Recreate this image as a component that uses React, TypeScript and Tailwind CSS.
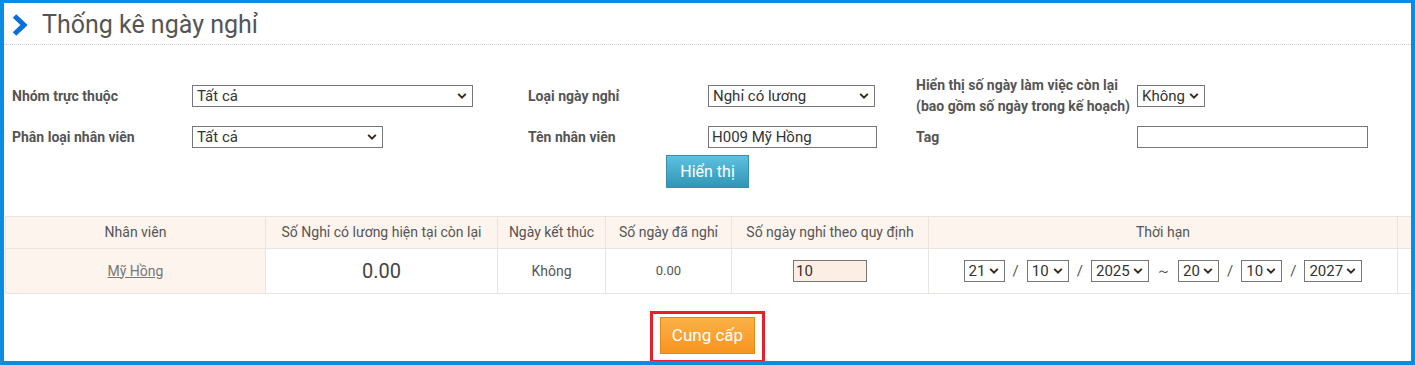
import { ReactNode } from 'react';

// Fake native select: box + value + small chevron
function Select({ value, className = '' }: { value: string; className?: string }) {
  return (
    <div
      className={`relative flex h-[22px] items-center border border-[#777] bg-white pl-[4px] pr-[20px] text-[15px] leading-none text-[#333] ${className}`}
    >
      <span>{value}</span>
      <svg
        className="absolute right-[5px] top-1/2 -translate-y-1/2"
        width="10"
        height="7"
        viewBox="0 0 10 7"
        fill="none"
      >
        <path d="M1.2 1.4 5 5.2 8.8 1.4" stroke="#3a2a1a" strokeWidth="2" />
      </svg>
    </div>
  );
}

function TextInput({ value = '', className = '' }: { value?: string; className?: string }) {
  return (
    <div
      className={`flex h-[22px] items-center border border-[#777] pl-[3px] text-[15px] leading-none text-[#333] ${className}`}
    >
      {value}
    </div>
  );
}

function Label({ children }: { children: ReactNode }) {
  return <div className="text-[14px] font-bold leading-[21px] text-[#555]">{children}</div>;
}

const Slash = () => <span className="px-[8px] text-[15px] text-[#555]">/</span>;

export default function App() {
  return (
    <div
      className="h-[365px] w-[1415px] overflow-hidden border-b-[4px] border-l-[4px] border-r-[4px] border-t-[3px] border-[#0b8ce0] bg-white"
      style={{ fontFamily: 'Roboto, "Noto Sans", sans-serif' }}
    >
      <div className="h-full overflow-hidden">
        {/* Title */}
        <div className="flex h-[42px] items-center border-b border-dotted border-[#c8c8c8] pl-[7px]">
          <svg width="18" height="24" viewBox="0 0 18 24" className="mt-[2px]">
            <path d="M3.5 3 13 12 3.5 21" stroke="#0a6fd8" strokeWidth="5" fill="none" />
          </svg>
          <h1 className="ml-[13px] mt-[2px] text-[25px] font-normal text-[#555]">Thống kê ngày nghỉ</h1>
        </div>

        {/* Filter form */}
        <div className="grid grid-cols-[180px_336px_180px_208px_221px_1fr] items-center gap-y-[9px] pl-[8px] pt-[30px]">
          <Label>Nhóm trực thuộc</Label>
          <Select value="Tất cả" className="w-[281px]" />
          <Label>Loại ngày nghỉ</Label>
          <Select value="Nghỉ có lương" className="w-[167px]" />
          <Label>
            Hiển thị số ngày làm việc còn lại
            <br />
            (bao gồm số ngày trong kế hoạch)
          </Label>
          <Select value="Không" className="w-[68px]" />

          <Label>Phân loại nhân viên</Label>
          <Select value="Tất cả" className="w-[191px]" />
          <Label>Tên nhân viên</Label>
          <TextInput value="H009 Mỹ Hồng" className="w-[169px]" />
          <Label>Tag</Label>
          <TextInput className="w-[231px]" />
        </div>

        <div className="mt-[7px] flex justify-center">
          <button className="h-[33px] w-[83px] border border-[#3b8fab] bg-gradient-to-b from-[#5cc2e2] to-[#3196b6] text-[16px] text-white">
            Hiển thị
          </button>
        </div>

        {/* Result table */}
        <table className="ml-[1px] mt-[28px] w-[1440px] table-fixed border-collapse text-[14px] text-[#555]">
          <colgroup>
            <col className="w-[260px]" />
            <col className="w-[232px]" />
            <col className="w-[108px]" />
            <col className="w-[126px]" />
            <col className="w-[197px]" />
            <col className="w-[469px]" />
            <col />
          </colgroup>
          <thead>
            <tr className="h-[32px] bg-[#fdf4ee]">
              {['Nhân viên', 'Số Nghỉ có lương hiện tại còn lại', 'Ngày kết thúc', 'Số ngày đã nghỉ', 'Số ngày nghỉ theo quy định', 'Thời hạn', ''].map(
                (h, i) => (
                  <th key={i} className="border border-[#e9e4e0] font-normal">
                    {h}
                  </th>
                ),
              )}
            </tr>
          </thead>
          <tbody>
            <tr className="h-[45px] text-center">
              <td className="border border-[#e9e4e0] bg-[#fdf4ee]">
                <a className="text-[#777] underline">Mỹ Hồng</a>
              </td>
              <td className="border border-[#e9e4e0] text-[20px] text-[#444]">0.00</td>
              <td className="border border-[#e9e4e0]">Không</td>
              <td className="border border-[#e9e4e0] text-[13px]">0.00</td>
              <td className="border border-[#e9e4e0]">
                <div className="flex justify-center">
                  <div className="flex h-[22px] w-[74px] items-center border border-[#777] bg-[#fdeee3] pl-[2px] text-[15px] leading-none text-[#333]">
                    10
                  </div>
                </div>
              </td>
              <td className="border border-[#e9e4e0]">
                <div className="flex items-center justify-center">
                  <Select value="21" className="w-[41px]" />
                  <Slash />
                  <Select value="10" className="w-[42px]" />
                  <Slash />
                  <Select value="2025" className="w-[58px]" />
                  <span className="w-[29px] text-center text-[15px] text-[#555]">～</span>
                  <Select value="20" className="w-[41px]" />
                  <Slash />
                  <Select value="10" className="w-[41px]" />
                  <Slash />
                  <Select value="2027" className="w-[58px]" />
                </div>
              </td>
              <td className="border border-[#e9e4e0]"></td>
            </tr>
          </tbody>
        </table>

        {/* Submit */}
        <div className="mt-[17px] flex justify-center">
          <div className="border-[3px] border-[#e5202b] px-[7px] pb-[6px] pt-[3px]">
            <button className="h-[37px] w-[95px] border border-[#e08a1a] bg-gradient-to-b from-[#fbb146] to-[#f7941e] text-[17px] text-white">
              Cung cấp
            </button>
          </div>
        </div>
      </div>
    </div>
  );
}
